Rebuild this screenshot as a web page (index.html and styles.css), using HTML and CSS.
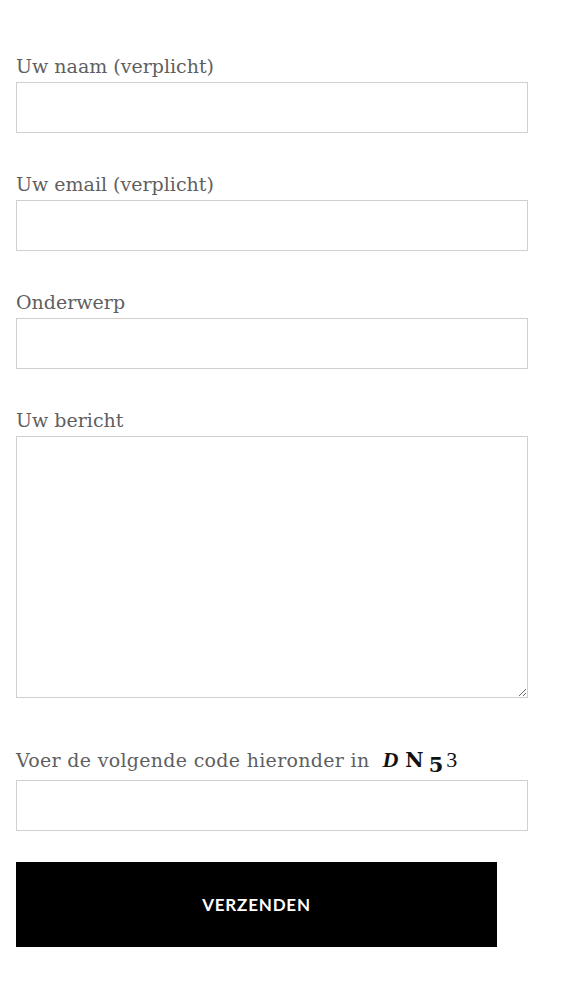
FILE: index.html
```html
<!DOCTYPE html>
<html lang="nl">
<head>
    <meta charset="UTF-8">
    <meta name="viewport" content="width=device-width, initial-scale=1.0">
    <title>Contact</title>
    <link rel="stylesheet" href="styles.css">
</head>
<body>
    <form class="contact-form">
        <div class="field">
            <label for="naam">Uw naam (verplicht)</label>
            <input type="text" id="naam">
        </div>
        <div class="field">
            <label for="email">Uw email (verplicht)</label>
            <input type="email" id="email">
        </div>
        <div class="field">
            <label for="onderwerp">Onderwerp</label>
            <input type="text" id="onderwerp">
        </div>
        <div class="field">
            <label for="bericht">Uw bericht</label>
            <textarea id="bericht"></textarea>
        </div>
        <div class="field field-captcha">
            <label for="code">Voer de volgende code hieronder in<span class="captcha"><span class="c1">D</span><span class="c2">N</span><span class="c3">5</span><span class="c4">3</span></span></label>
            <input type="text" id="code">
        </div>
        <button type="submit">VERZENDEN</button>
    </form>
</body>
</html>
```

FILE: styles.css
```css
body {
    margin: 0;
    background: #fff;
    font-family: "DejaVu Serif", serif;
}
.contact-form {
    padding: 52px 38px 40px 16px;
}
.field {
    margin-bottom: 37px;
}
label {
    display: block;
    font-size: 19px;
    line-height: 28px;
    color: #5f5f5f;
    margin-bottom: 2px;
}
input, textarea {
    display: block;
    box-sizing: border-box;
    width: 512px;
    height: 51px;
    border: 1px solid #d0d0d0;
    margin: 0;
    padding: 8px;
    font: inherit;
    background: #fff;
}
textarea {
    height: 262px;
}
.field-captcha {
    margin-bottom: 31px;
}
.field-captcha label {
    padding-top: 11px;
    margin-bottom: 6px;
    letter-spacing: 0.3px;
}
.captcha {
    margin-left: 13px;
    color: #111;
    font-family: "Liberation Serif", serif;
    font-size: 22px;
    line-height: 1;
    letter-spacing: 0;
}
.c1 {
    font-weight: bold;
    font-style: italic;
    margin-right: 7px;
}
.c2 {
    font-family: "DejaVu Serif", serif;
    font-size: 20px;
    font-weight: bold;
    margin-right: 5px;
}
.c3 {
    font-family: "DejaVu Serif", serif;
    font-size: 21px;
    font-weight: bold;
    position: relative;
    top: 5px;
    margin-right: 3px;
}
.c4 {
    font-weight: normal;
}
button {
    display: block;
    width: 481px;
    height: 85px;
    margin: 0;
    border: none;
    background: #000;
    color: #fff;
    font-family: Lato, sans-serif;
    font-weight: bold;
    font-size: 17px;
    letter-spacing: 0.8px;
    cursor: pointer;
}
```
